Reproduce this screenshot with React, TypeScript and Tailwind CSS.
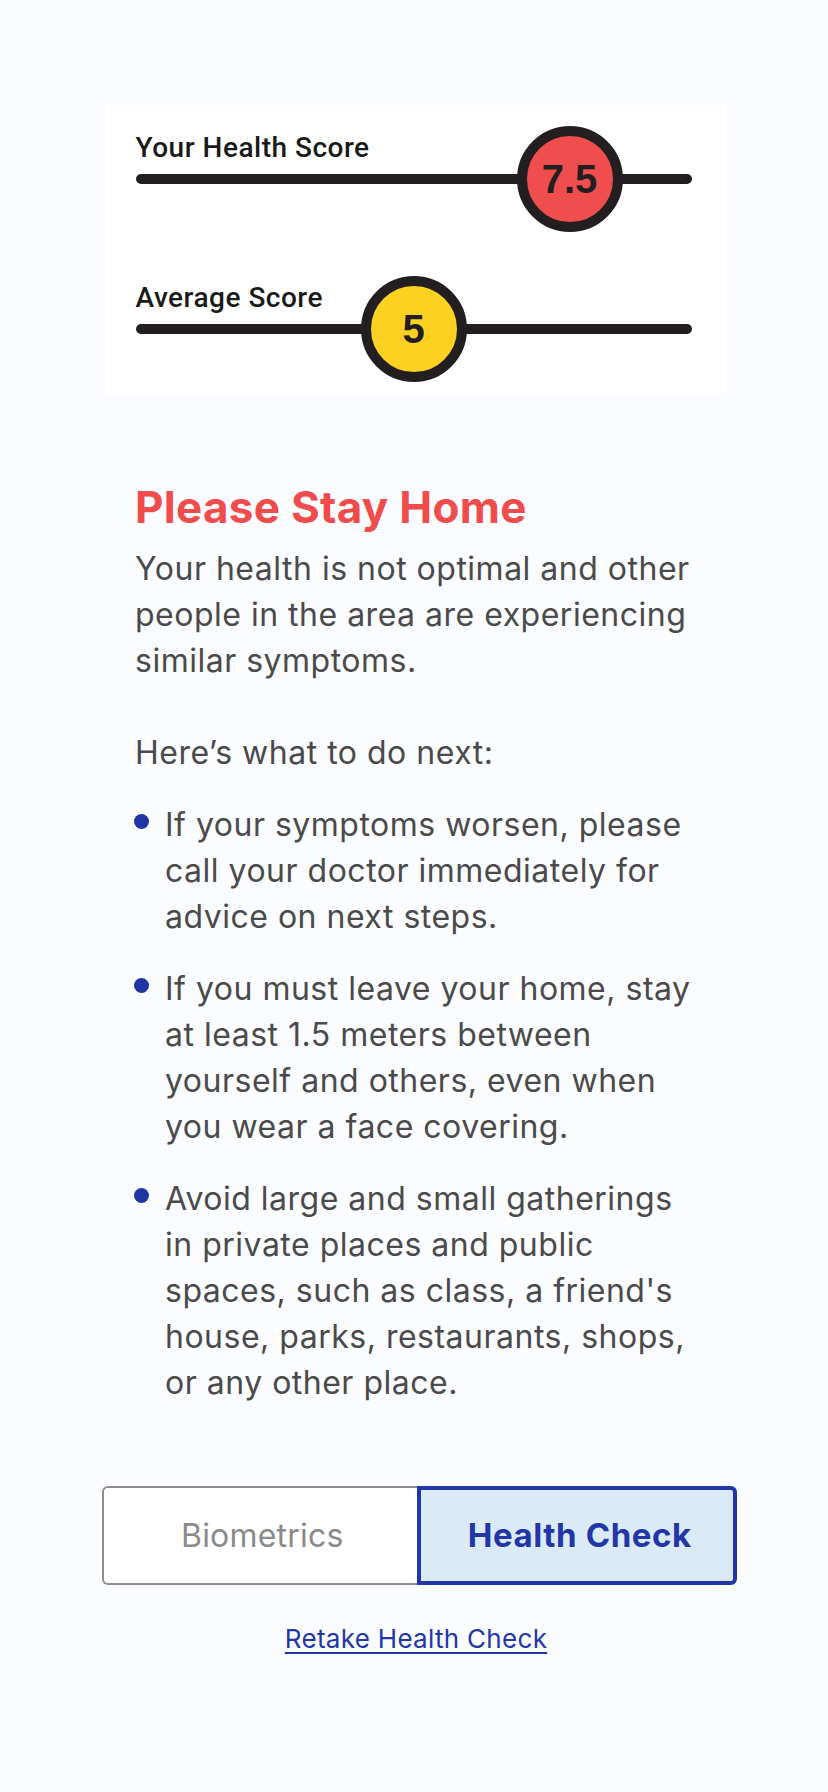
import React from "react";

const sans = { fontFamily: "Inter, 'Noto Sans', sans-serif" };
const label = { fontFamily: "Roboto, 'Liberation Sans', Arial, sans-serif" };
const num = { fontFamily: "'Liberation Sans', Arial, sans-serif" };

function Slider({
  title,
  value,
  left,
  fill,
  first,
}: {
  title: string;
  value: string;
  left: number;
  fill: string;
  first?: boolean;
}) {
  return (
    <div className={first ? "" : "mt-[100px]"}>
      <div className="text-[28px] leading-[28px] font-medium text-[#1a1a1a] tracking-[0.5px]" style={label}>
        {title}
      </div>
      <div className="relative mt-[12px] h-[10px] rounded-full bg-[#231f20]">
        <div
          className={`absolute top-1/2 -translate-y-1/2 w-[106px] h-[106px] rounded-full border-[10px] border-[#231f20] flex items-center justify-center ${fill}`}
          style={{ left }}
        >
          <span className="text-[40px] leading-none font-bold text-[#231f20]" style={num}>
            {value}
          </span>
        </div>
      </div>
    </div>
  );
}

export default function App() {
  const items = [
    "If your symptoms worsen, please call your doctor immediately for advice on next steps.",
    "If you must leave your home, stay at least 1.5 meters between yourself and others, even when you wear a face covering.",
    "Avoid large and small gatherings in private places and public spaces, such as class, a friend's house, parks, restaurants, shops, or any other place.",
  ];
  return (
    <div className="min-h-screen w-full bg-[#fafcff] pt-[105px] pb-[100px]" style={sans}>
      <div className="mx-auto w-[617px] bg-white pt-[29px] pb-[60px] pl-[30px] pr-[31px]">
        <Slider title="Your Health Score" value="7.5" left={381} fill="bg-[#f04e4e]" first />
        <Slider title="Average Score" value="5" left={225} fill="bg-[#fdd122]" />
      </div>

      <div className="ml-[135px] w-[570px] mt-[87px]">
        <h1 className="text-[44px] leading-[52px] font-bold text-[#f04c4c] tracking-[0.3px]">Please Stay Home</h1>
        <p className="mt-[13px] text-[32px] leading-[46px] text-[#4a4a4a] tracking-[0.5px]">
          Your health is not optimal and other people in the area are experiencing similar symptoms.
        </p>
        <p className="mt-[46px] text-[32px] leading-[46px] text-[#4a4a4a] tracking-[0.5px]">Here’s what to do next:</p>
        <ul className="mt-[26px] flex flex-col gap-[26px]">
          {items.map((t) => (
            <li key={t} className="flex items-start">
              <span className="mt-[12px] ml-[-1px] w-[15px] h-[15px] shrink-0 rounded-full bg-[#2034a6]" />
              <span className="ml-[16px] text-[32px] leading-[46px] text-[#4a4a4a] tracking-[0.5px]">{t}</span>
            </li>
          ))}
        </ul>
      </div>

      <div className="ml-[102px] w-[635px] mt-[80px] flex h-[99px]">
        <div className="flex-1 flex items-center justify-center border-2 border-r-0 border-[#8e8e8e] rounded-l-[6px] bg-white">
          <span className="text-[32px] text-[#8a8a8a] tracking-[0.2px] ml-[4px]">Biometrics</span>
        </div>
        <div className="flex-1 flex items-center justify-center border-4 border-[#2236a8] rounded-r-[6px] bg-[#dbeaf7]">
          <span className="text-[33px] font-bold text-[#2236a8] tracking-[0.6px] ml-[6px]">Health Check</span>
        </div>
      </div>

      <div className="mt-[38px] flex justify-center">
        <a className="text-[26px] leading-[32px] text-[#2236a8] underline underline-offset-[4px] ml-[4px] tracking-[0.3px]">
          Retake Health Check
        </a>
      </div>
    </div>
  );
}
